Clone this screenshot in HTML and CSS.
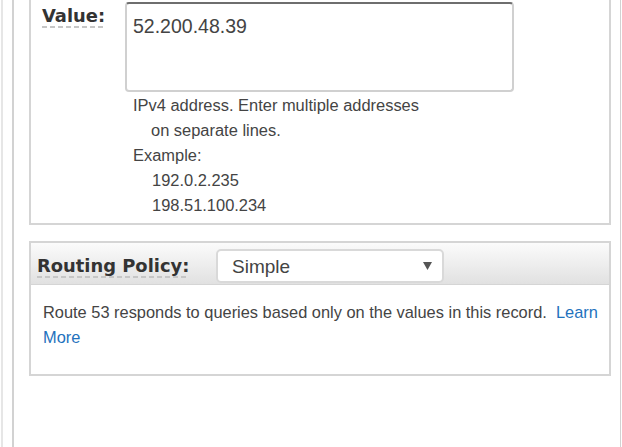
FILE: index.html
```
<!DOCTYPE html>
<html lang="en">
<head>
<meta charset="utf-8">
<title>Record set</title>
<link rel="stylesheet" href="styles.css">
</head>
<body>
<div class="frame">
  <div class="shell">
    <section class="panel panel-value">
      <div class="field-row">
        <div class="label-col"><span class="term">Value:</span></div>
        <div class="field-col">
          <textarea class="value-input" spellcheck="false">52.200.48.39</textarea>
          <div class="help">
            <p class="hang">IPv4 address. Enter multiple addresses on separate lines.</p>
            <p>Example:</p>
            <p class="ex">192.0.2.235</p>
            <p class="ex">198.51.100.234</p>
          </div>
        </div>
      </div>
    </section>
    <section class="panel panel-routing">
      <div class="routing-head">
        <div class="routing-label"><span class="term">Routing Policy:</span></div>
        <div class="select">
          <span class="select-text">Simple</span>
          <svg class="caret" width="9" height="8" viewBox="0 0 9 8"><path d="M0 0H9L4.5 8Z" fill="#555"/></svg>
        </div>
      </div>
      <p class="routing-body">Route 53 responds to queries based only on the values in this record.&nbsp; <a href="#" class="link">Learn More</a></p>
    </section>
  </div>
</div>
</body>
</html>
```
FILE: styles.css
```
html, body {
  margin: 0;
  padding: 0;
  background: #fff;
}
body {
  font-family: "Liberation Sans", Arial, sans-serif;
  color: #444;
}
.frame {
  margin-left: 1px;
  border-left: 2px solid #e6e6e6;
  min-height: 447px;
}
.shell {
  box-sizing: border-box;
  width: 609px;
  min-height: 447px;
  margin-left: 9px;
  border-left: 2px solid #d2d2d2;
  border-right: 1px solid #d2d2d2;
  padding: 0 9px 0 15px;
}
.panel {
  border: 2px solid #d5d5d5;
  background: #fff;
}
.panel-value {
  border-top: none;
}
.panel-routing {
  margin-top: 16px;
}
.field-row {
  display: flex;
}
.label-col {
  box-sizing: border-box;
  width: 94px;
  padding: 6px 0 0 11px;
}
.term {
  display: inline-block;
  font-family: "DejaVu Sans", Verdana, sans-serif;
  font-weight: bold;
  font-size: 17.9px;
  line-height: 20px;
  color: #333;
  padding-bottom: 2px;
  background-image: repeating-linear-gradient(to right, #c6c6c6 0 5px, transparent 5px 8px);
  background-size: 100% 2px;
  background-position: left bottom;
  background-repeat: no-repeat;
}
.field-col {
  padding: 2px 0 5px 0;
}
.value-input {
  display: block;
  box-sizing: border-box;
  width: 389px;
  height: 90px;
  margin: 0;
  border: 2px solid #d0d0d0;
  border-top-color: #6e6e6e;
  border-radius: 4px;
  padding: 10px 6px 8px;
  font-family: "Liberation Sans", Arial, sans-serif;
  font-size: 19.5px;
  line-height: 24px;
  color: #444;
  resize: none;
  outline: none;
  background: #fff;
}
.help {
  margin-top: 1px;
  font-size: 16.45px;
  line-height: 25px;
  padding-left: 8px;
}
.help p {
  margin: 0;
}
.help .hang {
  width: 286px;
  padding-left: 18px;
  text-indent: -18px;
}
.help .ex {
  padding-left: 19px;
}
.routing-head {
  display: flex;
  align-items: flex-start;
  box-sizing: content-box;
  height: 35px;
  padding: 6px 0 0 6px;
  background: linear-gradient(#fbfbfb, #e1e1e1);
  border-bottom: 1px solid #d5d5d5;
}
.routing-label {
  width: 179px;
  padding-top: 7px;
}
.select {
  box-sizing: border-box;
  width: 228px;
  height: 34px;
  display: flex;
  align-items: center;
  justify-content: space-between;
  padding: 2px 10px 0 14px;
  border: 2px solid #d9d9d9;
  border-radius: 5px;
  background: #fff;
  font-size: 19px;
  color: #444;
}
.caret {
  display: block;
  margin-top: -3px;
}
.routing-body {
  margin: 0;
  padding: 15px 10px 24px 12px;
  font-size: 16.4px;
  line-height: 25px;
  color: #444;
}
.link {
  color: #1f72bd;
  text-decoration: none;
}
```
